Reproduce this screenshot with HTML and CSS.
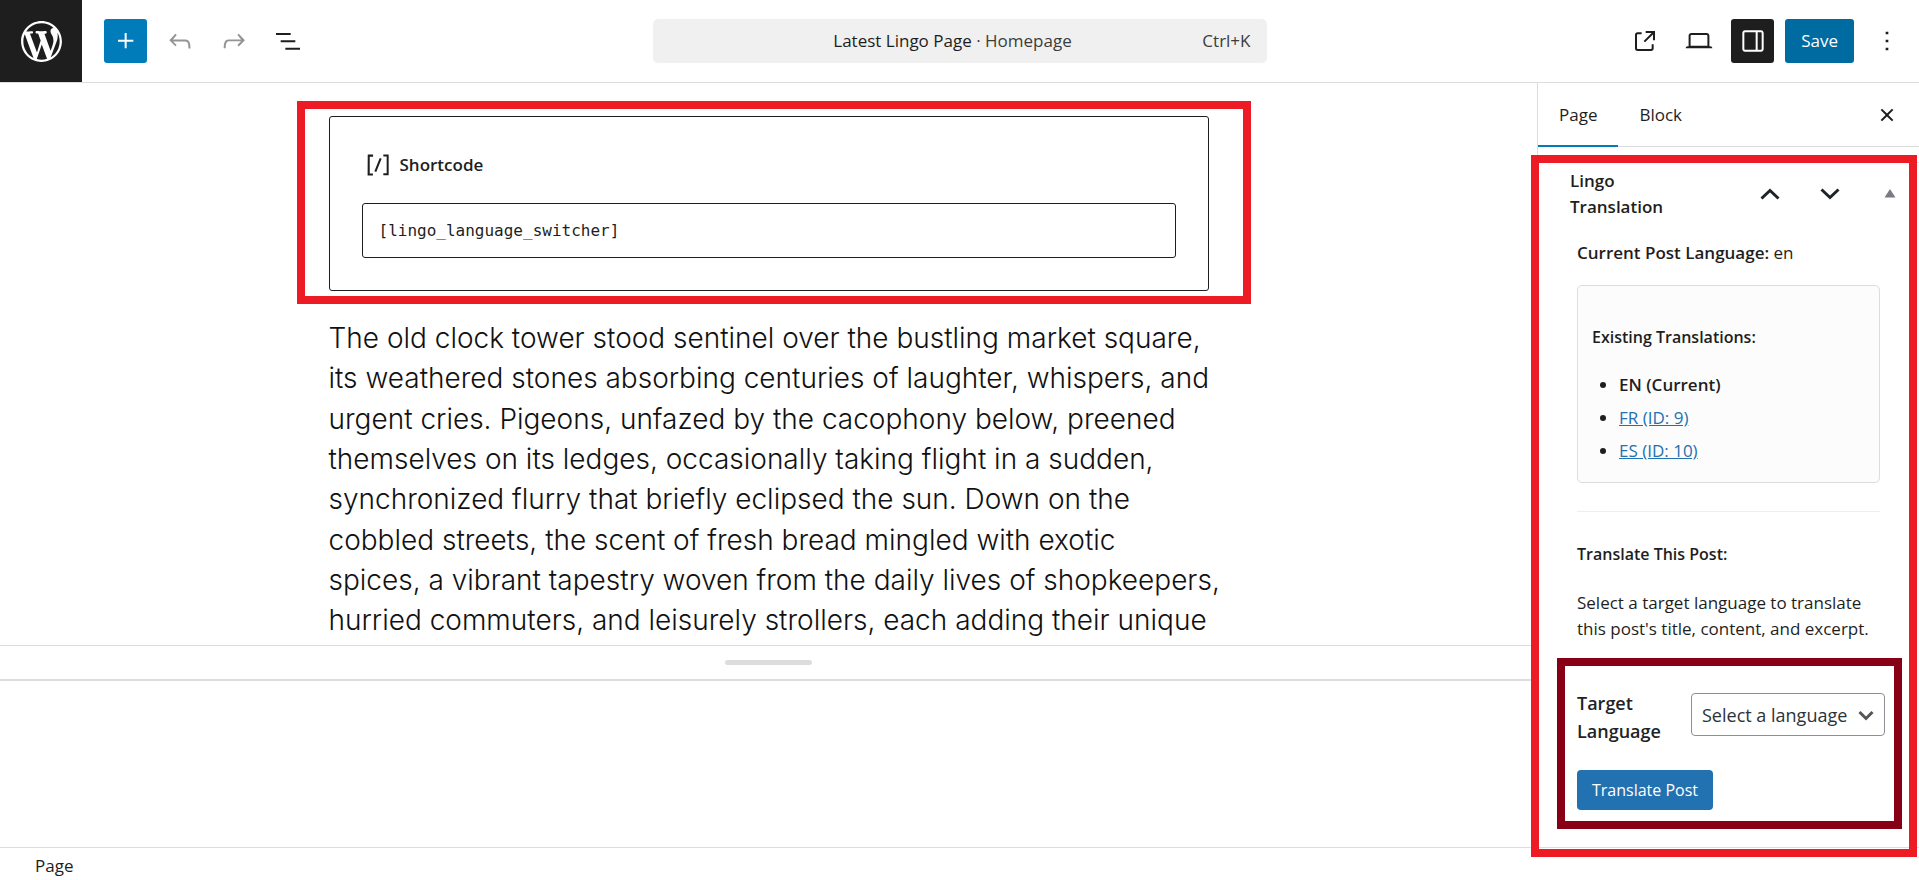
FILE: index.html
```html
<!DOCTYPE html>
<html lang="en">
<head>
<meta charset="utf-8">
<title>Latest Lingo Page</title>
<meta name="viewport" content="width=device-width, initial-scale=1">
<link rel="stylesheet" href="styles.css">
</head>
<body class="editor">
<header class="topbar">
  <a class="site-logo" href="#" aria-label="View pages">
    <svg viewBox="-2 -2 24 24" aria-hidden="true"><path d="M20 10c0-5.51-4.49-10-10-10C4.48 0 0 4.49 0 10c0 5.52 4.48 10 10 10 5.51 0 10-4.48 10-10zM7.78 15.37L4.37 6.22c.55-.02 1.17-.08 1.17-.08.5-.06.44-1.13-.06-1.11 0 0-1.45.11-2.37.11-.18 0-.37 0-.58-.01C4.12 2.69 6.87 1.11 10 1.11c2.33 0 4.45.87 6.05 2.34-.68-.11-1.65.39-1.65 1.58 0 .74.45 1.36.9 2.1.35.61.55 1.36.55 2.46 0 1.49-1.4 5-1.4 5l-3.03-8.37c.54-.02.82-.17.82-.17.5-.05.44-1.25-.06-1.22 0 0-1.44.12-2.38.12-.87 0-2.33-.12-2.33-.12-.5-.03-.56 1.2-.06 1.22l.92.08 1.26 3.41zM17.41 10c.24-.64.74-1.87.43-4.25.7 1.29 1.05 2.71 1.05 4.25 0 3.29-1.73 6.24-4.4 7.78.97-2.59 1.94-5.2 2.92-7.78zM6.1 18.09C3.12 16.65 1.11 13.53 1.11 10c0-1.3.23-2.48.72-3.59C3.25 10.3 4.67 14.2 6.1 18.09zm4.03-6.63l2.58 6.98c-.86.29-1.76.45-2.71.45-.79 0-1.57-.11-2.29-.33.81-2.38 1.62-4.74 2.42-7.1z"/></svg>
  </a>
  <div class="tools tools-left">
    <button class="icon-btn is-primary" type="button" aria-label="Add block"><svg viewBox="0 0 24 24"><path d="M11 12.5V17.5H12.5V12.5H17.5V11H12.5V6H11V11H6V12.5H11Z"/></svg></button>
    <button class="icon-btn is-muted" type="button" aria-label="Undo"><svg viewBox="0 0 24 24"><path d="M18.3 11.7c-.6-.6-1.4-.9-2.3-.9H6.7l2.9-3.3-1.1-1-4.5 5L8.5 16l1-1-2.7-2.7H16c.5 0 .9.2 1.3.5 1 1 1 3.4 1 4.5v.3h1.5v-.2c0-1.5 0-4.3-1.5-5.7z"/></svg></button>
    <button class="icon-btn is-muted" type="button" aria-label="Redo"><svg viewBox="0 0 24 24"><path d="M15.6 6.5l-1.1 1 2.9 3.3H8c-.9 0-1.7.3-2.3.9-1.4 1.5-1.4 4.2-1.4 5.6v.2h1.5v-.3c0-1.1 0-3.5 1-4.5.3-.3.7-.5 1.3-.5h9.2L14.5 15l1.1 1.1 4.6-4.6-4.6-5z"/></svg></button>
    <button class="icon-btn" type="button" aria-label="Document overview"><svg viewBox="0 0 24 24"><path d="M3 6h11v1.5H3V6Zm3.5 5.5h11V13h-11v-1.5ZM21 17H10v1.5h11V17Z"/></svg></button>
  </div>
  <button class="command" type="button">
    <span class="command-title">Latest Lingo Page <span class="command-type">· Homepage</span></span>
    <span class="command-key">Ctrl+K</span>
  </button>
  <div class="tools tools-right">
    <a class="icon-btn" href="#" aria-label="View page"><svg viewBox="0 0 24 24"><path d="M19.5 4.5h-7V6h4.44l-5.97 5.97 1.06 1.06L18 7.06v4.44h1.5v-7Zm-13 1a2 2 0 0 0-2 2v10a2 2 0 0 0 2 2h10a2 2 0 0 0 2-2v-3H17v3a.5.5 0 0 1-.5.5h-10a.5.5 0 0 1-.5-.5v-10a.5.5 0 0 1 .5-.5h3V5.5h-3Z"/></svg></a>
    <button class="icon-btn" type="button" aria-label="Preview"><svg viewBox="0 0 24 24"><path d="M20.5 16h-.7V8c0-1.1-.9-2-2-2H6.2c-1.1 0-2 .9-2 2v8h-.7c-.8 0-1.5.7-1.5 1.5h20c0-.8-.7-1.5-1.5-1.5zM5.7 8c0-.3.2-.5.5-.5h11.6c.3 0 .5.2.5.5v7.6H5.7V8z"/></svg></button>
    <button class="icon-btn is-pressed" type="button" aria-label="Settings"><svg viewBox="0 0 24 24"><path d="M18 4H6c-1.1 0-2 .9-2 2v12c0 1.1.9 2 2 2h12c1.1 0 2-.9 2-2V6c0-1.1-.9-2-2-2zm-4 14.5H6c-.3 0-.5-.2-.5-.5V6c0-.3.2-.5.5-.5h8v13zm4.5-.5c0 .3-.2.5-.5.5h-2.5v-13H18c.3 0 .5.2.5.5v12z"/></svg></button>
    <button class="save" type="button">Save</button>
    <button class="icon-btn" type="button" aria-label="Options"><svg viewBox="0 0 24 24"><path d="M13 19h-2v-2h2v2zm0-6h-2v-2h2v2zm0-6h-2V5h2v2z"/></svg></button>
  </div>
</header>

<div class="workspace">
  <main class="main">
    <div class="canvas">
      <div class="content">
        <section class="shortcode">
          <label class="shortcode-label" for="shortcode"><svg viewBox="0 0 24 24" aria-hidden="true"><path d="M16 4.2v1.5h2.5v12.5H16v1.5h4V4.2h-4zM4.2 19.8h4v-1.5H5.8V5.8h2.5V4.2h-4l-.1 15.6zm5.1-3.1l1.4.6 4-10-1.4-.6-4 10z"/></svg>Shortcode</label>
          <input class="shortcode-input" id="shortcode" type="text" value="[lingo_language_switcher]">
          <span class="mark mark-shortcode"></span>
        </section>
        <p class="prose">The old clock tower stood sentinel over the bustling market square,<br>
        its weathered stones absorbing centuries of laughter, whispers, and<br>
        urgent cries. Pigeons, unfazed by the cacophony below, preened<br>
        themselves on its ledges, occasionally taking flight in a sudden,<br>
        synchronized flurry that briefly eclipsed the sun. Down on the<br>
        cobbled streets, the scent of fresh bread mingled with exotic<br>
        spices, a vibrant tapestry woven from the daily lives of shopkeepers,<br>
        hurried commuters, and leisurely strollers, each adding their unique</p>
      </div>
    </div>
    <div class="resizer"><span class="resizer-handle"></span></div>
    <div class="drawer"></div>
  </main>

  <aside class="sidebar">
    <div class="tabs" role="tablist">
      <button class="tab is-active" type="button" role="tab" aria-selected="true">Page</button>
      <button class="tab" type="button" role="tab" aria-selected="false">Block</button>
      <button class="icon-btn tabs-close" type="button" aria-label="Close settings"><svg viewBox="0 0 24 24"><path d="M12 13.06l3.712 3.713 1.061-1.06L13.061 12l3.712-3.712-1.06-1.06L12 10.938 8.288 7.227l-1.061 1.06L10.939 12l-3.712 3.712 1.06 1.061L12 13.061z"/></svg></button>
    </div>
    <section class="panel">
      <div class="panel-head">
        <h2 class="panel-title">Lingo Translation</h2>
        <div class="panel-order">
          <button class="order-btn" type="button" aria-label="Move up"><svg viewBox="0 0 20 12"><path d="M1.500 10.500 10 2.500l8.500 8"/></svg></button>
          <button class="order-btn" type="button" aria-label="Move down"><svg viewBox="0 0 20 12"><path d="M1.500 1.500 10 9.500l8.500-8"/></svg></button>
          <button class="order-btn toggle" type="button" aria-label="Toggle panel"><svg viewBox="0 0 20 12"><path d="M10 1l5.500 8.500h-11z"/></svg></button>
        </div>
      </div>
      <div class="panel-body">
        <p class="current"><strong>Current Post Language:</strong> en</p>
        <div class="existing">
          <p class="existing-title"><strong>Existing Translations:</strong></p>
          <ul class="existing-list">
            <li><strong>EN (Current)</strong></li>
            <li><a href="#">FR (ID: 9)</a></li>
            <li><a href="#">ES (ID: 10)</a></li>
          </ul>
        </div>
        <hr class="rule">
        <p class="translate-title"><strong>Translate This Post:</strong></p>
        <p class="translate-help">Select a target language to translate<br>this post's title, content, and excerpt.</p>
        <form class="translate-form">
          <div class="field">
            <label class="field-label" for="target">Target Language</label>
            <div class="select-wrap">
              <select class="select" id="target"><option>Select a language</option></select>
              <svg class="select-arrow" viewBox="0 0 20 20" aria-hidden="true"><path d="M3.500 7 10 13.500 16.500 7"/></svg>
            </div>
          </div>
          <button class="translate-btn" type="button">Translate Post</button>
          <span class="mark mark-form"></span>
        </form>
      </div>
    </section>
    <span class="mark mark-panel"></span>
  </aside>
</div>

<footer class="footer">Page</footer>
</body>
</html>
```

FILE: styles.css
```css
* { box-sizing: border-box; }

.editor {
  margin: 0;
  height: 100vh;
  display: flex;
  flex-direction: column;
  background: #fff;
  color: #1e1e1e;
  font: 17px/26px "Open Sans", "Noto Sans", sans-serif;
  overflow: hidden;
}

button, input, select { font: inherit; color: inherit; }
button { border: 0; padding: 0; background: none; cursor: pointer; }
p, h2, ul { margin: 0; }
strong { font-weight: 600; }
svg { display: block; fill: currentColor; }

/* Top bar */
.topbar {
  display: grid;
  grid-template-columns: auto 1fr minmax(0, 614px) 1fr;
  align-items: center;
  flex: none;
  border-bottom: 1px solid #ddd;
}
.site-logo {
  display: grid;
  place-items: center;
  width: 82px;
  height: 82px;
  margin-right: -82px;
  background: #1e1e1e;
  color: #fff;
}
.site-logo svg { width: 49px; height: 49px; }
.tools { display: flex; align-items: center; gap: 11px; }
.tools-left { padding-left: 104px; }
.tools-right { justify-content: flex-end; padding-right: 11px; }
.icon-btn {
  display: grid;
  place-items: center;
  width: 43px;
  height: 44px;
  border-radius: 3px;
  color: #1e1e1e;
}
.icon-btn svg { width: 32px; height: 32px; }
.icon-btn.is-primary { background: #007cba; color: #fff; }
.icon-btn.is-muted { color: #949494; }
.icon-btn.is-pressed { background: #1e1e1e; color: #fff; }
.save {
  height: 44px;
  padding: 0 16px;
  border-radius: 3px;
  background: #006ba1;
  color: #fff;
}
.command {
  display: grid;
  grid-template-columns: 1fr auto 1fr;
  align-items: center;
  height: 44px;
  padding: 0 16px 0 2px;
  border-radius: 5px;
  background: #f0f0f0;
}
.command-title { grid-column: 2; }
.command-type { color: #3c3c3c; }
.command-key { justify-self: end; color: #3c3c3c; }

/* Workspace */
.workspace { flex: 1; min-height: 0; display: flex; }
.main { flex: 1; min-width: 0; display: flex; flex-direction: column; }
.canvas { flex: 1; min-height: 0; overflow: hidden; padding: 33px 32px 0; }
.content { max-width: 880px; margin: 0 auto; }

.shortcode {
  position: relative;
  padding: 32px;
  border: 1px solid #1e1e1e;
  border-radius: 3px;
}
.shortcode-label {
  display: flex;
  align-items: center;
  gap: 6px;
  margin-bottom: 22px;
  font-weight: 600;
}
.shortcode-label svg { width: 32px; height: 32px; }
.shortcode-input {
  display: block;
  width: 100%;
  height: 55px;
  padding: 0 16px;
  border: 1px solid #1e1e1e;
  border-radius: 3px;
  background: #fff;
  font: 16px "DejaVu Sans Mono", "Liberation Mono", monospace;
}
.prose {
  margin-top: 27px;
  color: #111;
  font: 300 28px/1.44 Inter, "Open Sans", sans-serif;
  white-space: nowrap;
}

.resizer {
  display: grid;
  place-items: center;
  height: 36px;
  border-top: 1px solid #ddd;
  border-bottom: 2px solid #ddd;
}
.resizer-handle { width: 87px; height: 5px; border-radius: 3px; background: #ddd; }
.drawer { height: 166px; }

/* Sidebar */
.sidebar {
  position: relative;
  width: 382px;
  flex: none;
  border-left: 1px solid #ddd;
}
.tabs {
  display: flex;
  align-items: stretch;
  height: 64px;
  padding-right: 11px;
  border-bottom: 1px solid #ddd;
}
.tab { padding: 2px 21px 0; margin-bottom: -1px; border-bottom: 2px solid transparent; }
.tab.is-active { border-bottom-color: #007cba; }
.tabs-close { margin: auto 0 auto auto; }

.panel { margin-top: 15px; border-top: 1px solid #e0e0e0; }
.panel-head {
  display: flex;
  align-items: center;
  justify-content: space-between;
  padding: 5px 19px 0 32px;
}
.panel-title { width: 120px; font-size: 17px; line-height: 26px; font-weight: 600; }
.panel-order { display: flex; align-items: center; gap: 40px; }
.order-btn svg { width: 20px; height: 12px; fill: none; stroke: #1d2327; stroke-width: 3; }
.order-btn.toggle svg { fill: #787c82; stroke: none; }
.panel-body { padding: 20px 39px 0; }
.existing {
  margin-top: 19px;
  padding: 38px 14px 15px;
  border: 1px solid #ddd;
  border-radius: 5px;
  background: #fcfcfc;
}
.existing-title, .translate-title { font-size: 16px; }
.existing-list { margin-top: 18px; padding-left: 27px; }
.existing-list li { line-height: 33px; }
.existing-list a { color: #2271b1; text-decoration: underline; }
.rule { margin: 28px 0 0; border: 0; border-top: 1px solid #eee; }
.translate-title { margin-top: 29px; }
.translate-help { margin-top: 23px; white-space: nowrap; }
.translate-form { position: relative; margin-top: 47px; }
.field {
  display: flex;
  align-items: flex-start;
  justify-content: space-between;
  margin-right: -5px;
}
.field-label { width: 100px; font-size: 18px; font-weight: 600; line-height: 28px; color: #1d2327; }
.select-wrap { position: relative; margin-top: 4px; }
.select {
  display: block;
  width: 194px;
  height: 43px;
  padding: 0 30px 0 10px;
  border: 1px solid #8c8f94;
  border-radius: 4px;
  background: #fff;
  color: #2c3338;
  font-size: 18px;
  appearance: none;
}
.select-arrow {
  position: absolute;
  right: 9px;
  top: 12px;
  width: 20px;
  height: 20px;
  fill: none;
  stroke: #555;
  stroke-width: 3;
  pointer-events: none;
}
.translate-btn {
  height: 40px;
  margin-top: 25px;
  padding: 0 15px;
  border-radius: 4px;
  background: #2271b1;
  color: #fff;
  font-size: 16px;
}

/* Highlight frames */
.mark { position: absolute; border: 8px solid #ed1c24; pointer-events: none; z-index: 2; }
.mark-shortcode { inset: -16px -43px -14px -33px; }
.mark-panel { inset: 72px 2px -10px -7px; }
.mark-form { inset: -31px -22px -19px -20px; border-color: #880015; }

.footer {
  flex: none;
  height: 33px;
  padding: 5px 35px;
  border-top: 1px solid #ddd;
}
```
